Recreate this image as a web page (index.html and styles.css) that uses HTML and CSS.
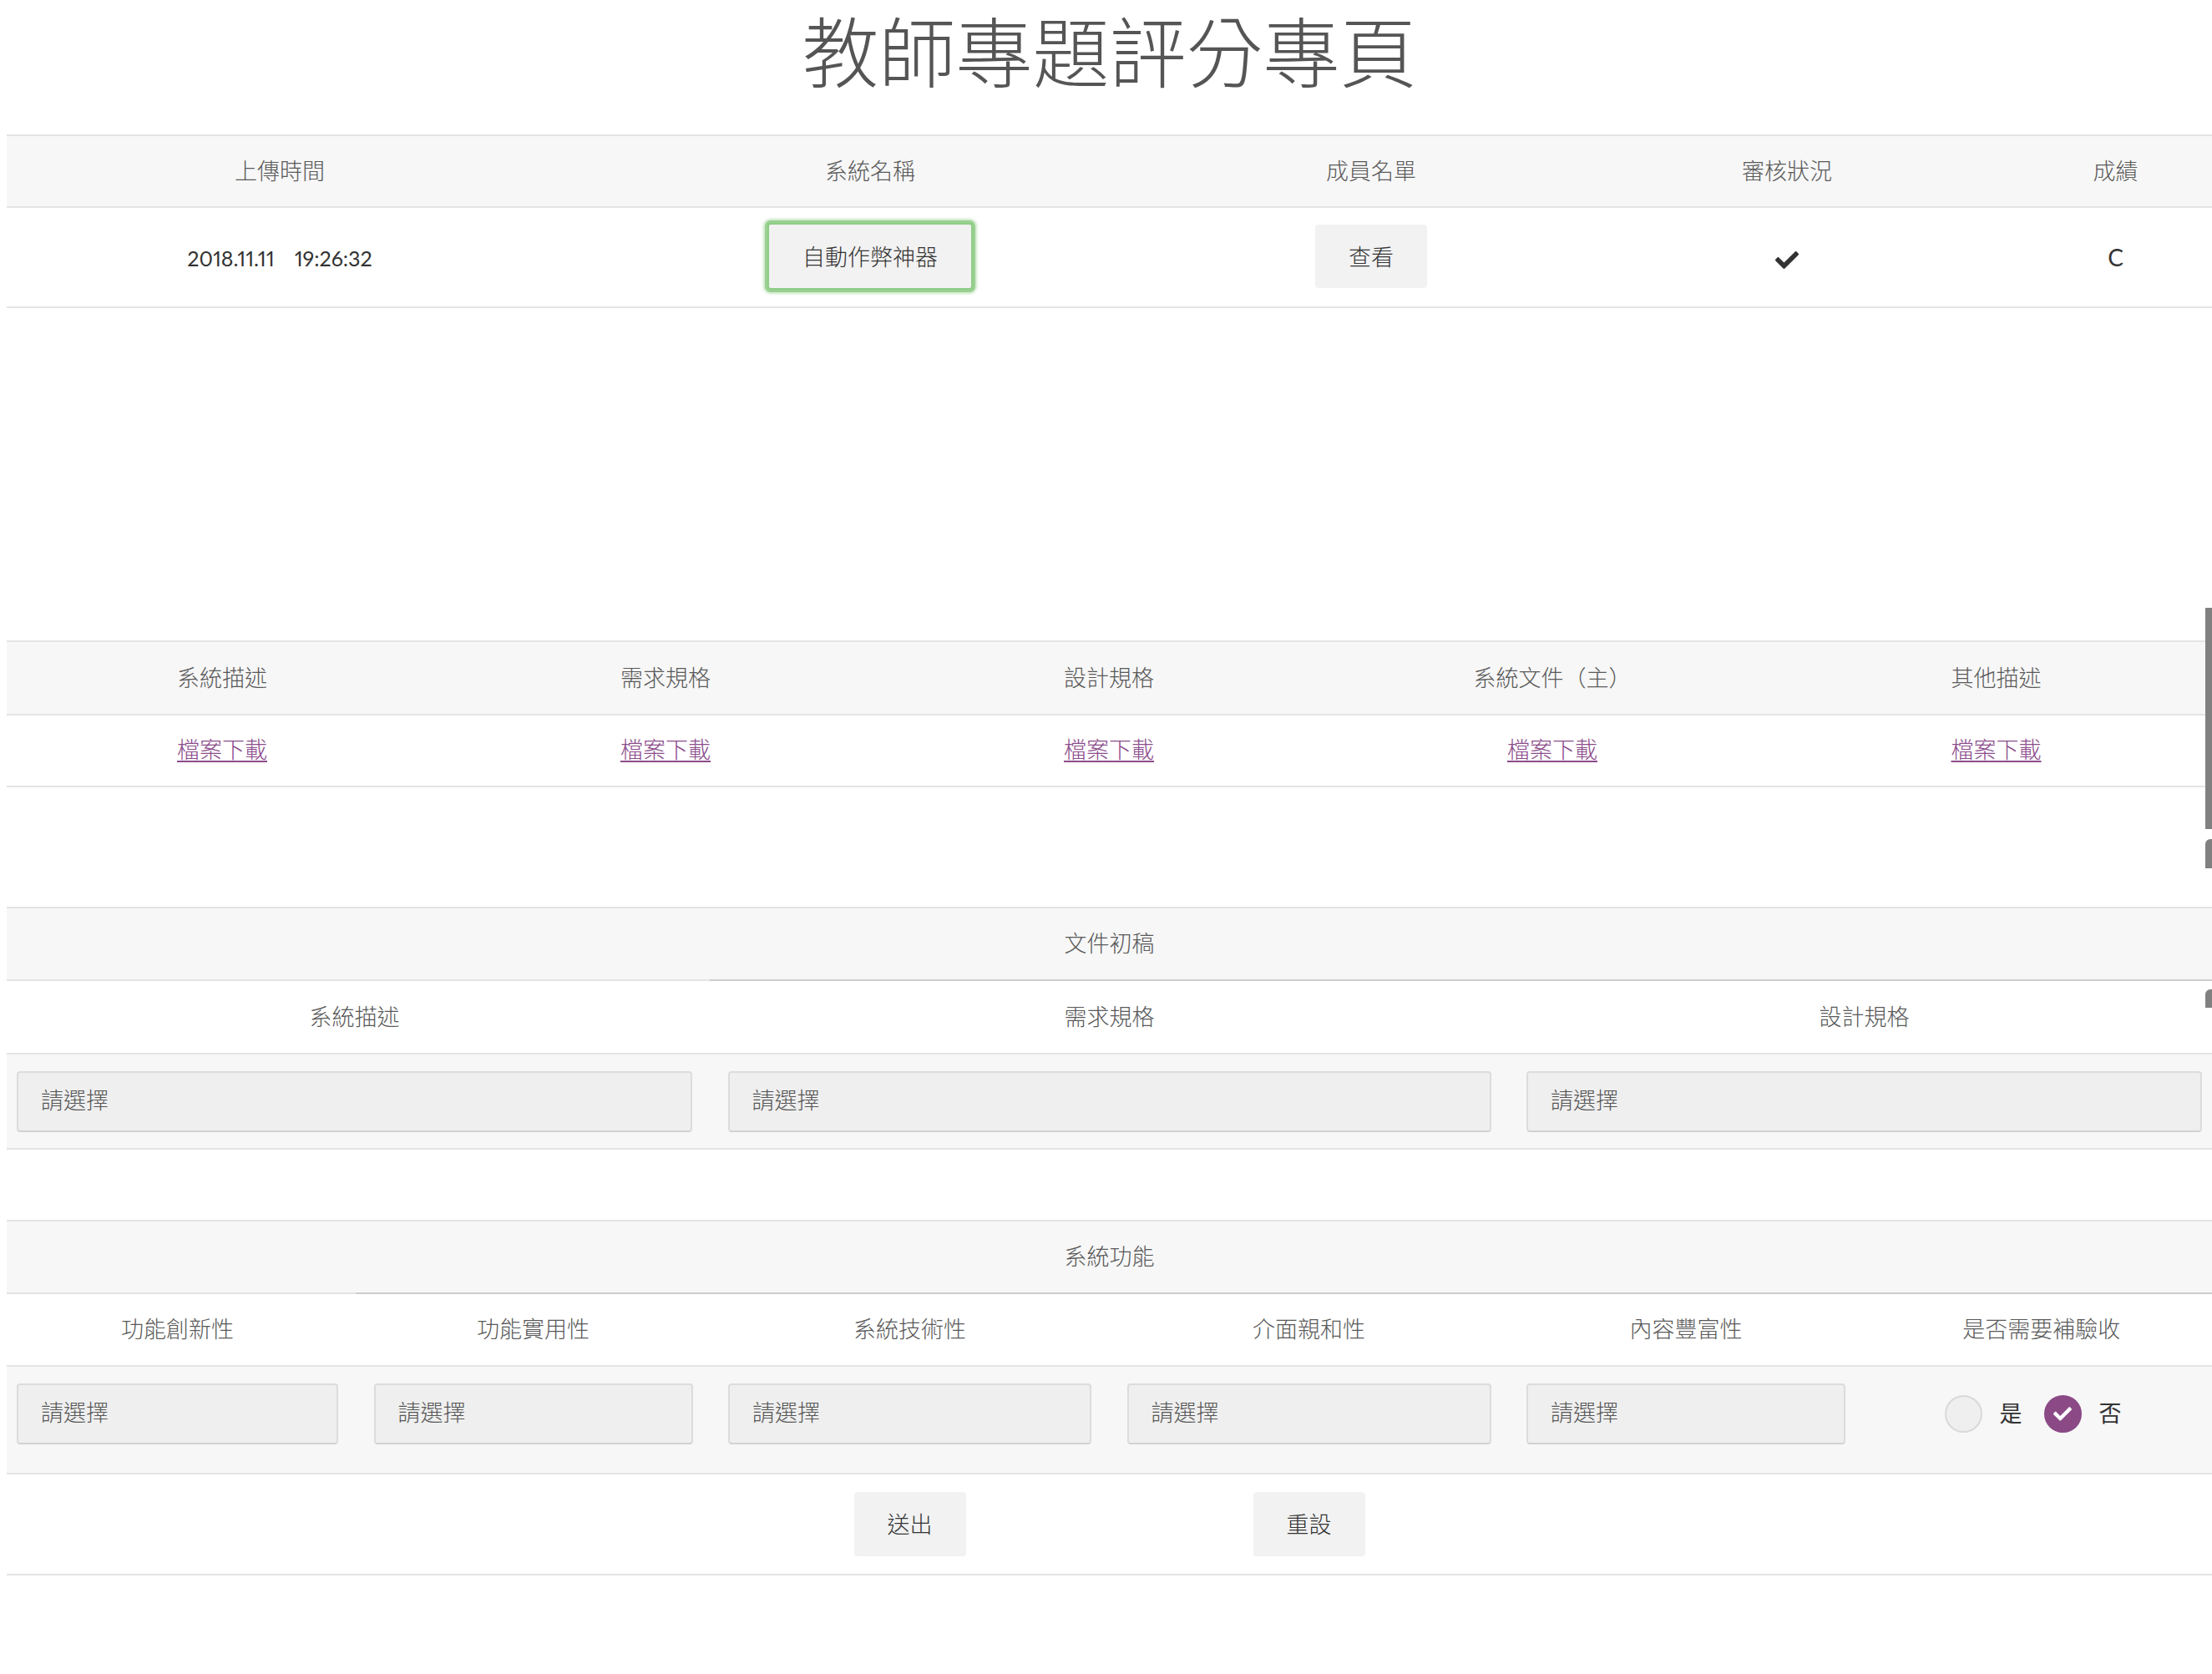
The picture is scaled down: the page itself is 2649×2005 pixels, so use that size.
FILE: index.html
```html
<!DOCTYPE html>
<html lang="zh-Hant">
<head>
<meta charset="utf-8">
<title>教師專題評分專頁</title>
<link rel="stylesheet" href="styles.css">
</head>
<body>
<div class="page">
  <h1 class="title">教師專題評分專頁</h1>

  <section class="tbl t1">
    <div class="row head">
      <div class="cell">上傳時間</div>
      <div class="cell">系統名稱</div>
      <div class="cell">成員名單</div>
      <div class="cell">審核狀況</div>
      <div class="cell">成績</div>
    </div>
    <div class="row data">
      <div class="cell dark"><span class="lat">2018.11.11</span><span class="lat tm">19:26:32</span></div>
      <div class="cell"><button class="btn focused" type="button">自動作弊神器</button></div>
      <div class="cell"><button class="btn small" type="button">查看</button></div>
      <div class="cell"><svg class="check" viewBox="0 65 512 384" aria-hidden="true"><path fill="#333" d="M173.9 439.4l-166.4-166.4c-10-10-10-26.2 0-36.2l36.2-36.2c10-10 26.2-10 36.2 0L192 312.7 432.1 72.6c10-10 26.2-10 36.2 0l36.2 36.2c10 10 10 26.2 0 36.2l-294.4 294.4c-10 10-26.2 10-36.2 0z"/></svg></div>
      <div class="cell dark"><span class="lat grade">C</span></div>
    </div>
  </section>

  <section class="tbl t2">
    <div class="row head">
      <div class="cell">系統描述</div>
      <div class="cell">需求規格</div>
      <div class="cell">設計規格</div>
      <div class="cell">系統文件（主）</div>
      <div class="cell">其他描述</div>
    </div>
    <div class="row data">
      <div class="cell"><a class="dl" href="#">檔案下載</a></div>
      <div class="cell"><a class="dl" href="#">檔案下載</a></div>
      <div class="cell"><a class="dl" href="#">檔案下載</a></div>
      <div class="cell"><a class="dl" href="#">檔案下載</a></div>
      <div class="cell"><a class="dl" href="#">檔案下載</a></div>
    </div>
  </section>

  <section class="tbl t3">
    <div class="row head span split3">
      <div class="cell">文件初稿</div>
    </div>
    <div class="row sub cols">
      <div class="cell">系統描述</div>
      <div class="cell">需求規格</div>
      <div class="cell">設計規格</div>
    </div>
    <div class="row inputs cols">
      <div class="select">請選擇</div>
      <div class="select">請選擇</div>
      <div class="select">請選擇</div>
    </div>
  </section>

  <section class="tbl t4">
    <div class="row head span split4">
      <div class="cell">系統功能</div>
    </div>
    <div class="row sub cols">
      <div class="cell">功能創新性</div>
      <div class="cell">功能實用性</div>
      <div class="cell">系統技術性</div>
      <div class="cell">介面親和性</div>
      <div class="cell">內容豐富性</div>
      <div class="cell">是否需要補驗收</div>
    </div>
    <div class="row inputs cols">
      <div class="select">請選擇</div>
      <div class="select">請選擇</div>
      <div class="select">請選擇</div>
      <div class="select">請選擇</div>
      <div class="select">請選擇</div>
      <div class="radios">
        <span class="radio"></span><span class="rlabel">是</span>
        <span class="radio checked"><svg viewBox="0 65 512 384" aria-hidden="true"><path fill="#fff" d="M173.9 439.4l-166.4-166.4c-10-10-10-26.2 0-36.2l36.2-36.2c10-10 26.2-10 36.2 0L192 312.7 432.1 72.6c10-10 26.2-10 36.2 0l36.2 36.2c10 10 10 26.2 0 36.2l-294.4 294.4c-10 10-26.2 10-36.2 0z"/></svg></span><span class="rlabel">否</span>
      </div>
    </div>
    <div class="row actions cols">
      <div></div>
      <div></div>
      <div class="cell"><button class="btn" type="button">送出</button></div>
      <div class="cell"><button class="btn" type="button">重設</button></div>
      <div></div>
      <div></div>
    </div>
  </section>
</div>

<div class="sb sb1"></div>
<div class="sb sb2"></div>
<div class="sb sb3"></div>
</body>
</html>
```

FILE: styles.css
```css
* {
  box-sizing: border-box;
}

html,
body {
  margin: 0;
  padding: 0;
  background: #fff;
}

body {
  position: relative;
  width: 2649px;
  height: 2005px;
  overflow: hidden;
  font-family: "Noto Sans CJK TC", "Noto Sans CJK SC", sans-serif;
  font-weight: 300;
  font-size: 27px;
  color: #595959;
}

.page {
  padding-left: 8px;
}

.title {
  margin: 0;
  height: 161px;
  font-size: 92px;
  line-height: 116px;
  font-weight: 300;
  text-align: center;
  color: #555;
}

.tbl {
  border-top: 2px solid #e4e4e4;
}

.row {
  position: relative;
  display: grid;
  align-items: center;
  border-bottom: 2px solid #e4e4e4;
}

.head {
  background: #f7f7f7;
}

.cell {
  padding-bottom: 4px;
  text-align: center;
  white-space: nowrap;
}

.dark {
  color: #333;
}

.lat {
  font-family: "Lato", "Noto Sans CJK TC", sans-serif;
  font-weight: 400;
  font-size: 25px;
  font-variant-numeric: proportional-nums;
  color: #333;
}

.grade {
  font-size: 28px;
  font-weight: 400;
  color: #333;
}

.tm {
  margin-left: 24px;
}

/* table 1 */
.t1 .row {
  grid-template-columns: 654px 760px 440px 556px 1fr;
}

.t1 .head {
  height: 86px;
}

.t1 .data {
  height: 120px;
}

.t1 .data .cell {
  padding-bottom: 2px;
}

.check {
  display: inline-block;
  width: 28px;
  height: 21px;
  vertical-align: middle;
}

/* buttons */
.btn {
  display: inline-block;
  height: 76px;
  padding: 0 40px 2px;
  border: 0;
  border-radius: 4px;
  background: #f2f2f2;
  font-family: inherit;
  font-weight: 300;
  font-size: 27px;
  color: #333;
  vertical-align: middle;
}

.btn.focused {
  height: 80px;
  border: 2px solid #8fcc87;
  box-shadow: 0 0 0 3px #99d191, 0 0 3px 5px rgba(160, 212, 152, 0.55);
}

/* table 2 */
.t2 {
  margin-top: 398px;
}

.t2 .row {
  grid-template-columns: 516px 546px 516px 546px 1fr;
}

.t2 .head {
  height: 88px;
}

.t2 .data {
  height: 86px;
}

.t2 .data .cell {
  padding-bottom: 6px;
}

.dl {
  color: #8b4c8b;
  text-decoration: underline;
  text-underline-offset: 3px;
}

/* sectioned tables */
.span {
  grid-template-columns: 1fr;
}

.split3::after,
.split4::after {
  content: "";
  position: absolute;
  right: 0;
  bottom: -2px;
  height: 2px;
  background: #cdcdcd;
}

.split3::after {
  left: 842px;
}

.split4::after {
  left: 418px;
}

.cols {
  padding: 0 12px;
  column-gap: 42.5px;
}

.t3 {
  margin-top: 143px;
}

.t3 .cols {
  grid-template-columns: 809px 914px 1fr;
}

.t3 .head {
  height: 87px;
}

.t3 .sub {
  height: 88px;
}

.t3 .inputs {
  height: 114px;
}

.inputs {
  align-items: start;
  padding-top: 20px;
  background: #f7f7f7;
}

.select {
  display: flex;
  align-items: center;
  height: 73px;
  padding: 0 0 6px 27px;
  background: #efefef;
  border: 2px solid #dcdcdc;
  border-bottom-color: #d2d2d2;
  border-radius: 4px;
  color: #555;
}

.t4 {
  margin-top: 84px;
}

.t4 .cols {
  grid-template-columns: 385px 382px 435px 436px 382px 1fr;
}

.t4 .head {
  height: 87px;
}

.t4 .sub {
  height: 87px;
}

.t4 .inputs {
  height: 129px;
}

.t4 .actions {
  height: 121px;
  align-items: start;
  padding-top: 21px;
}

.t4 .actions .cell {
  padding-bottom: 0;
}

.t4 .actions .btn {
  height: 77px;
}

/* radios */
.radios {
  display: flex;
  align-items: center;
  height: 73px;
  padding-left: 76px;
}

.radio {
  display: inline-flex;
  align-items: center;
  justify-content: center;
  width: 45px;
  height: 45px;
  border-radius: 50%;
  background: #efefef;
  border: 2px solid #d9d9d9;
}

.radio.checked {
  background: #8b4a86;
  border-color: #8b4a86;
}

.radio svg {
  width: 22px;
  height: 17px;
}

.rlabel {
  margin: 0 26px 4px 21px;
  font-weight: 400;
  color: #333;
}

/* right edge overlay bars */
.sb {
  position: absolute;
  right: 0;
  width: 8px;
  background: #808080;
}

.sb1 {
  top: 728px;
  height: 265px;
}

.sb2 {
  top: 1005px;
  height: 35px;
  border-top-left-radius: 6px;
}

.sb3 {
  top: 1185px;
  height: 22px;
  border-top-left-radius: 6px;
}
```
